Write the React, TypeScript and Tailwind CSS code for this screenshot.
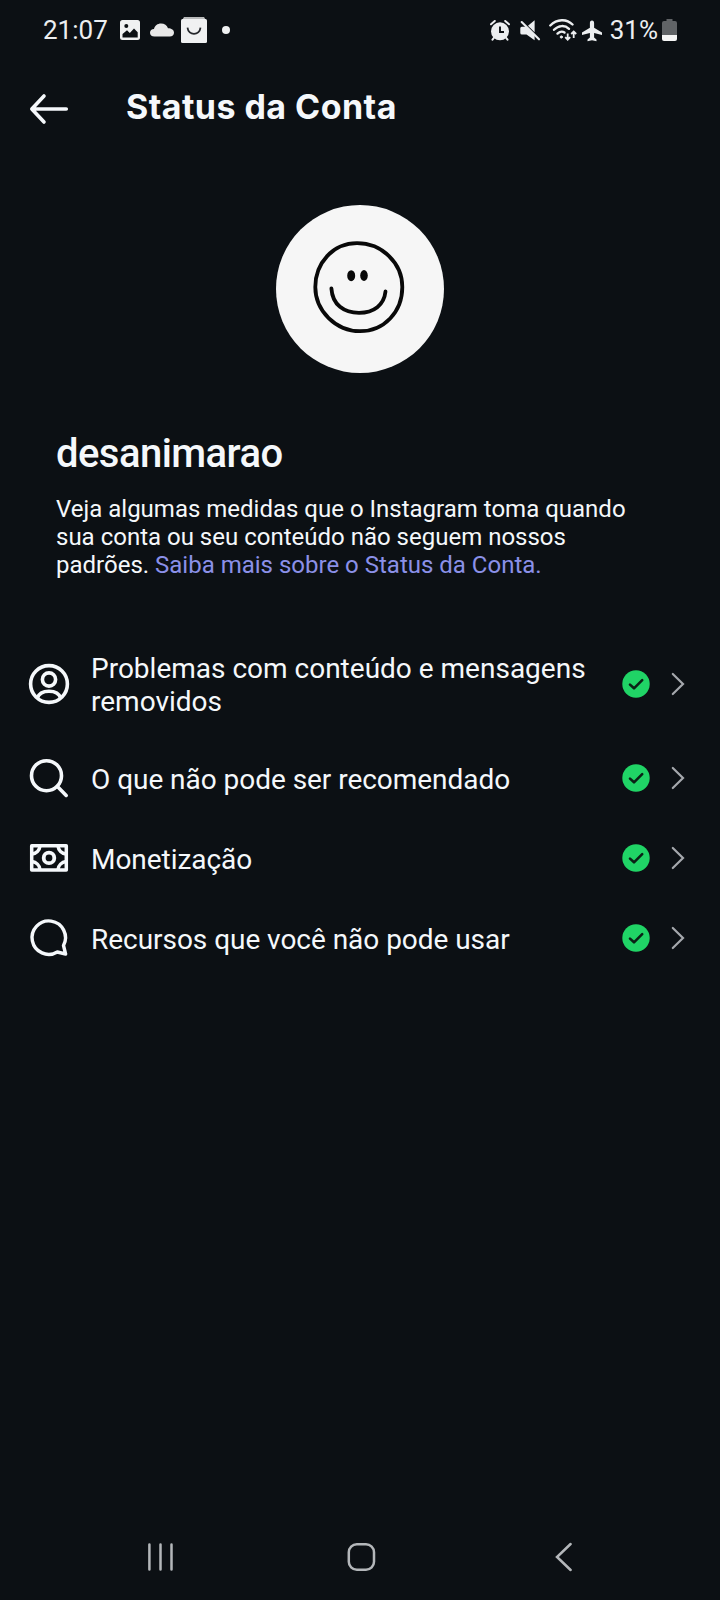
import type { ReactNode } from 'react';

interface StatusItem {
  label: string;
  icon: ReactNode;
  tall?: boolean;
}

const ProfileIcon: React.FC = () => (
  <svg viewBox="0 0 42 42" className="h-[42px] w-[42px]" fill="none" stroke="currentColor" strokeWidth="3.6">
    <circle cx="21" cy="21" r="18.4" />
    <circle cx="21" cy="16.5" r="6.6" />
    <path d="M9.2 35.3 C11 30 15.5 28.3 21 28.3 C26.5 28.3 31 30 32.8 35.3" />
  </svg>
);

const SearchIcon: React.FC = () => (
  <svg viewBox="0 0 42 42" className="h-[42px] w-[42px]" fill="none" stroke="currentColor" strokeWidth="3.6" strokeLinecap="round">
    <circle cx="18.5" cy="18.7" r="15" />
    <path d="M29.4 29.6 L38.2 38.4" />
  </svg>
);

const MoneyIcon: React.FC = () => (
  <svg viewBox="0 0 42 42" className="h-[42px] w-[42px]" fill="none" stroke="currentColor" strokeWidth="3.5" strokeLinejoin="round">
    <rect x="3.7" y="8.7" width="34.6" height="24.4" />
    <circle cx="21" cy="20.9" r="5.3" strokeWidth="3.8" />
    <path d="M12 9 A9 9 0 0 1 4 17 M30 9 A9 9 0 0 0 38 17 M12 32.6 A9 9 0 0 0 4 24.6 M30 32.6 A9 9 0 0 1 38 24.6" />
  </svg>
);

const CommentIcon: React.FC = () => (
  <svg viewBox="0 0 42 42" className="h-[42px] w-[42px]" fill="none" stroke="currentColor" strokeWidth="3.4" strokeLinejoin="round">
    <path d="M35.5 28.5 A16.7 16.7 0 1 0 29.3 35 L37.6 37 Z" />
  </svg>
);

const items: StatusItem[] = [
  { label: 'Problemas com conteúdo e mensagens removidos', icon: <ProfileIcon />, tall: true },
  { label: 'O que não pode ser recomendado', icon: <SearchIcon /> },
  { label: 'Monetização', icon: <MoneyIcon /> },
  { label: 'Recursos que você não pode usar', icon: <CommentIcon /> },
];

const StatusBar: React.FC = () => (
  <div className="flex h-[60px] items-center pl-[43px] text-[26px] leading-[30px] text-[#eceef0]">
    <span>21:07</span>
    <svg viewBox="0 0 20 20" className="ml-[12px] h-[20px] w-[20px]">
      <rect width="20" height="20" rx="2.5" fill="#f0f1f2" />
      <circle cx="6.3" cy="6" r="2" fill="#0c1014" />
      <path d="M2.5 17.5 V14 L7 10.2 L9.8 13 L14 8.5 L17.7 12.3 V17.5 Z" fill="#0c1014" />
    </svg>
    <svg viewBox="0 0 24 14" className="ml-[10px] -mt-[1px] h-[14px] w-[24px]" fill="#e8e8e8">
      <path d="M4.5 13.5 C1.5 13.5 0 11.8 0 9.7 C0 7.5 1.7 6 4 6 C4.8 2.7 7.5 0.6 11 0.6 C14.5 0.6 17 2.3 18 5.3 C21.5 5.3 24 7 24 9.7 C24 12 22.3 13.5 19.8 13.5 Z" />
    </svg>
    <svg viewBox="0 0 26 26" className="ml-[7px] h-[26px] w-[26px]">
      <path d="M3 0 H23 L26 5 H0 Z" fill="#b9babb" />
      <rect y="2" width="26" height="24" rx="1.5" fill="#f0f1f2" />
      <path d="M6.5 10.7 C7.5 19 18.5 19 19.5 10.7" fill="none" stroke="#24272b" strokeWidth="1.8" />
    </svg>
    <span className="ml-[15px] h-[8px] w-[8px] rounded-full bg-[#f0f1f2]" />

    <div className="ml-auto flex items-center pr-[43px]">
      <svg viewBox="0 0 20 21" className="mt-[1px] h-[21px] w-[20px]" fill="none">
        <circle cx="10" cy="11.3" r="9" fill="#eceef0" />
        <path d="M1 4.3 L4.8 1 M19 4.3 L15.2 1 M4.5 17 L2.5 19.7 M15.5 17 L17.5 19.7" stroke="#eceef0" strokeWidth="2" strokeLinecap="round" />
        <path d="M10 6.5 V12 H14" stroke="#0c1014" strokeWidth="1.9" />
      </svg>
      <svg viewBox="0 0 20 21" className="ml-[10px] mt-[1px] h-[21px] w-[20px] overflow-visible">
        <path d="M8 5.8 L14.6 0.3 V12.2 Z" fill="#eceef0" />
        <path d="M0.3 8.2 Q0.3 6.7 1.8 6.7 H6.3 L14.6 15 V20.2 L6.5 14.5 H2 Q0.3 14.5 0.3 13 Z" fill="#eceef0" />
        <path d="M1.7 2 L19 19.3" stroke="#eceef0" strokeWidth="2.1" strokeLinecap="round" />
      </svg>
      <svg viewBox="0 0 28 22" className="ml-[9px] h-[22px] w-[28px]" fill="none" stroke="#eceef0" strokeWidth="2.4" strokeLinecap="round">
        <path d="M1.3 6.5 C8 -0.4 17.5 -0.4 23.5 5.5" />
        <path d="M5 10.8 C9.5 6 16 6 20 9.8" />
        <path d="M8.5 14.6 C11 12.3 13.5 12.2 15.5 13.5" />
        <circle cx="12.3" cy="18" r="1.1" fill="#eceef0" strokeWidth="1" />
        <path d="M18.7 14.5 V20 M16.2 18.2 L18.7 20.7 L21.2 18.2 M24.7 19 V13 M22.2 15 L24.7 12.5 L27.2 15" strokeWidth="1.8" strokeLinecap="butt" />
      </svg>
      <svg viewBox="0 0 20 22" className="ml-[5px] mt-[1px] h-[22px] w-[20px]" fill="#eceef0">
        <path d="M10 0.5 C11.5 0.5 12.1 1.8 12.1 3 V7.8 L20 12.6 V15 L12.1 13 V17.5 L14.5 19.5 V21.3 L10 20.2 L5.5 21.3 V19.5 L7.9 17.5 V13 L0 15 V12.6 L7.9 7.8 V3 C7.9 1.8 8.5 0.5 10 0.5 Z" />
      </svg>
      <span className="ml-[8px]">31%</span>
      <svg viewBox="0 0 15 22" className="ml-[4px] h-[22px] w-[15px]">
        <path d="M4.5 0 H10.5 V2 H13 Q15 2 15 4 V17 H0 V4 Q0 2 2 2 H4.5 Z" fill="#606366" />
        <path d="M0 16 H15 V20 Q15 22 13 22 H2 Q0 22 0 20 Z" fill="#f5f5f5" />
      </svg>
    </div>
  </div>
);

const Avatar: React.FC = () => (
  <svg viewBox="0 0 168 168" className="h-[168px] w-[168px]" fill="none" stroke="#090909" strokeLinecap="round">
    <circle cx="84" cy="84" r="84" fill="#f6f6f6" stroke="none" />
    <path
      d="M81 38.2 C106 38.2 126.3 58 126.3 82 C126.3 107 108 126.2 84 126.2 C60 126.2 39.3 106 39.3 82 C39.3 58 57 38.2 81 38.2 Z"
      strokeWidth="3.8"
    />
    <ellipse cx="75.2" cy="70.7" rx="4" ry="5.5" fill="#090909" stroke="none" />
    <ellipse cx="88" cy="70.5" rx="3.8" ry="5.4" fill="#090909" stroke="none" />
    <path d="M55.4 83.5 C56.5 100 68 107.8 83 107.8 C98 107.8 108 100 109.5 86.5" strokeWidth="3.8" />
  </svg>
);

const StatusRow: React.FC<{ item: StatusItem }> = ({ item }) => (
  <button
    className={
      item.tall
        ? 'flex h-[108px] w-full items-center pl-7 pr-[35px] text-left'
        : 'flex h-20 w-full items-center pl-7 pr-[35px] text-left tracking-[-0.04px]'
    }
  >
    {item.icon}
    <span className="ml-[21px] w-[510px] pt-[2px] text-[28px] leading-[33px]">{item.label}</span>
    <svg viewBox="0 0 28 28" className="ml-auto h-7 w-7 shrink-0" fill="none">
      <circle cx="14" cy="14" r="13.7" fill="#20d466" />
      <path d="M8 14.6 L12 18.3 L20.2 10.2" stroke="#0b2216" strokeWidth="2.6" strokeLinecap="round" strokeLinejoin="round" />
    </svg>
    <svg viewBox="0 0 14 24" className="ml-[21px] h-6 w-[14px] shrink-0" fill="none" stroke="#a5a8ad" strokeWidth="2.2" strokeLinecap="round">
      <path d="M1.8 2 L12 12 L1.8 22" />
    </svg>
  </button>
);

const App: React.FC = () => {
  return (
    <div className="flex h-[1600px] w-[720px] flex-col bg-[#0c1014] font-['Roboto',sans-serif] text-[#f5f8fb]">
      <StatusBar />

      <header className="flex h-[98px] items-center pl-[29px]">
        <svg viewBox="0 0 40 32" className="h-8 w-10" fill="none" stroke="currentColor" strokeWidth="3.6" strokeLinecap="round" strokeLinejoin="round">
          <path d="M15 3 L2.8 16 L15 29 M2.8 16 H37.3" />
        </svg>
        <h1 className="-mt-[4px] ml-[57px] font-['Inter',sans-serif] text-[34px] font-bold leading-10 tracking-[0.45px]">
          Status da Conta
        </h1>
      </header>

      <div className="flex justify-center pt-[47px]">
        <Avatar />
      </div>

      <section className="px-14 pt-[56px]">
        <h2 className="text-[40px] font-medium leading-[50px] tracking-[-0.55px]">desanimarao</h2>
        <p className="mt-[16px] text-[24px] leading-7">
          Veja algumas medidas que o Instagram toma quando
          <br />
          sua conta ou seu conteúdo não seguem nossos
          <br />
          padrões. <a className="text-[#8b90e8]">Saiba mais sobre o Status da Conta.</a>
        </p>
      </section>

      <main className="mt-[51px]">
        {items.map((item) => (
          <StatusRow key={item.label} item={item} />
        ))}
      </main>

      <nav className="mt-auto flex h-[87px] items-center pl-[147px] text-[#b4b7ba]">
        <svg viewBox="0 0 28 30" className="h-[30px] w-7" stroke="currentColor" strokeWidth="2.5" strokeLinecap="round">
          <path d="M2.4 2.6 V27.4 M13.5 2.6 V27.4 M24.5 2.6 V27.4" />
        </svg>
        <svg viewBox="0 0 30 30" className="ml-[171px] h-[30px] w-[30px]" fill="none" stroke="currentColor" strokeWidth="2.5">
          <rect x="2.8" y="2.2" width="25.2" height="25.6" rx="8" />
        </svg>
        <svg viewBox="0 0 18 30" className="ml-[178px] h-[30px] w-[18px]" fill="none" stroke="currentColor" strokeWidth="2.5" strokeLinecap="round">
          <path d="M16.6 2 L3 15 L16.6 28" />
        </svg>
      </nav>
    </div>
  );
};

export default App;
